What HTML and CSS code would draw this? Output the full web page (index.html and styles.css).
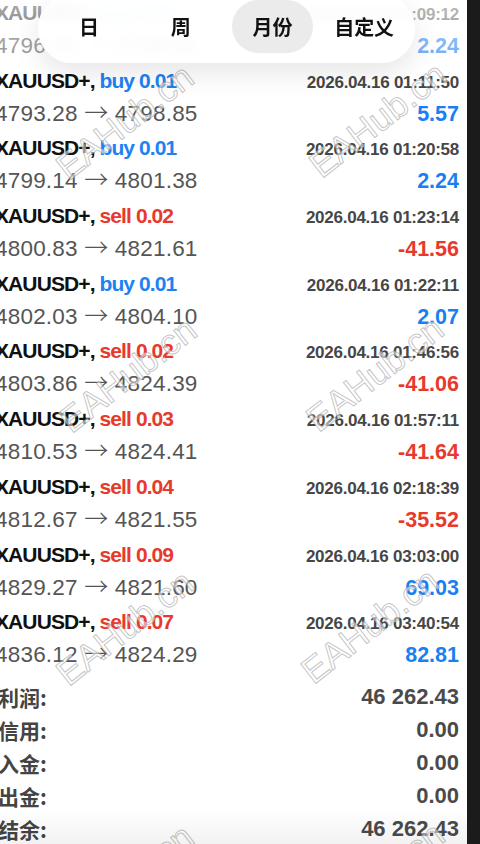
FILE: index.html
```html
<!DOCTYPE html>
<html lang="zh-CN">

<head>
    <meta charset="UTF-8" />
    <meta name="viewport" content="width=device-width, initial-scale=1.0" />
    <title>历史</title>
    <link rel="stylesheet" href="styles.css">
</head>

<body>
    <div class="phone">
        <div class="screen">
            <ul class="deals">
                <li class="deal">
                    <div class="deal-head">
                        <span class="sym">XAUUSD+, <span class="buy">buy 0.01</span></span>
                        <span class="time">2026.04.16 01:09:12</span>
                    </div>
                    <div class="deal-body">
                        <span class="prices">4796.41 <span class="arrow">→</span> 4798.65</span>
                        <span class="profit plus">2.24</span>
                    </div>
                </li>
                <li class="deal">
                    <div class="deal-head">
                        <span class="sym">XAUUSD+, <span class="buy">buy 0.01</span></span>
                        <span class="time">2026.04.16 01:11:50</span>
                    </div>
                    <div class="deal-body">
                        <span class="prices">4793.28 <span class="arrow">→</span> 4798.85</span>
                        <span class="profit plus">5.57</span>
                    </div>
                </li>
                <li class="deal">
                    <div class="deal-head">
                        <span class="sym">XAUUSD+, <span class="buy">buy 0.01</span></span>
                        <span class="time">2026.04.16 01:20:58</span>
                    </div>
                    <div class="deal-body">
                        <span class="prices">4799.14 <span class="arrow">→</span> 4801.38</span>
                        <span class="profit plus">2.24</span>
                    </div>
                </li>
                <li class="deal">
                    <div class="deal-head">
                        <span class="sym">XAUUSD+, <span class="sell">sell 0.02</span></span>
                        <span class="time">2026.04.16 01:23:14</span>
                    </div>
                    <div class="deal-body">
                        <span class="prices">4800.83 <span class="arrow">→</span> 4821.61</span>
                        <span class="profit minus">-41.56</span>
                    </div>
                </li>
                <li class="deal">
                    <div class="deal-head">
                        <span class="sym">XAUUSD+, <span class="buy">buy 0.01</span></span>
                        <span class="time">2026.04.16 01:22:11</span>
                    </div>
                    <div class="deal-body">
                        <span class="prices">4802.03 <span class="arrow">→</span> 4804.10</span>
                        <span class="profit plus">2.07</span>
                    </div>
                </li>
                <li class="deal">
                    <div class="deal-head">
                        <span class="sym">XAUUSD+, <span class="sell">sell 0.02</span></span>
                        <span class="time">2026.04.16 01:46:56</span>
                    </div>
                    <div class="deal-body">
                        <span class="prices">4803.86 <span class="arrow">→</span> 4824.39</span>
                        <span class="profit minus">-41.06</span>
                    </div>
                </li>
                <li class="deal">
                    <div class="deal-head">
                        <span class="sym">XAUUSD+, <span class="sell">sell 0.03</span></span>
                        <span class="time">2026.04.16 01:57:11</span>
                    </div>
                    <div class="deal-body">
                        <span class="prices">4810.53 <span class="arrow">→</span> 4824.41</span>
                        <span class="profit minus">-41.64</span>
                    </div>
                </li>
                <li class="deal">
                    <div class="deal-head">
                        <span class="sym">XAUUSD+, <span class="sell">sell 0.04</span></span>
                        <span class="time">2026.04.16 02:18:39</span>
                    </div>
                    <div class="deal-body">
                        <span class="prices">4812.67 <span class="arrow">→</span> 4821.55</span>
                        <span class="profit minus">-35.52</span>
                    </div>
                </li>
                <li class="deal">
                    <div class="deal-head">
                        <span class="sym">XAUUSD+, <span class="sell">sell 0.09</span></span>
                        <span class="time">2026.04.16 03:03:00</span>
                    </div>
                    <div class="deal-body">
                        <span class="prices">4829.27 <span class="arrow">→</span> 4821.60</span>
                        <span class="profit plus">69.03</span>
                    </div>
                </li>
                <li class="deal">
                    <div class="deal-head">
                        <span class="sym">XAUUSD+, <span class="sell">sell 0.07</span></span>
                        <span class="time">2026.04.16 03:40:54</span>
                    </div>
                    <div class="deal-body">
                        <span class="prices">4836.12 <span class="arrow">→</span> 4824.29</span>
                        <span class="profit plus">82.81</span>
                    </div>
                </li>
            </ul>

            <div class="summary">
                <div class="sum-row"><span class="sum-label">利润:</span><span class="sum-value">46 262.43</span></div>
                <div class="sum-row"><span class="sum-label">信用:</span><span class="sum-value">0.00</span></div>
                <div class="sum-row"><span class="sum-label">入金:</span><span class="sum-value">0.00</span></div>
                <div class="sum-row"><span class="sum-label">出金:</span><span class="sum-value">0.00</span></div>
                <div class="sum-row"><span class="sum-label">结余:</span><span class="sum-value">46 262.43</span></div>
            </div>

            <!-- watermark -->
            <div class="marks">
                <span class="mark m1">EAHub.cn</span>
                <span class="mark m2">EAHub.cn</span>
                <span class="mark m3">EAHub.cn</span>
                <span class="mark m4">EAHub.cn</span>
                <span class="mark m5">EAHub.cn</span>
                <span class="mark m6">EAHub.cn</span>
                <span class="mark m7">EAHub.cn</span>
                <span class="mark m8">EAHub.cn</span>
            </div>

            <div class="fade-top"></div>
            <div class="fade-bottom"></div>

            <div class="tabs">
                <span class="tab">日</span>
                <span class="tab">周</span>
                <span class="tab active">月份</span>
                <span class="tab">自定义</span>
            </div>
        </div>
        <div class="edge"></div>
    </div>
</body>

</html>
```

FILE: styles.css
```css
body {
    margin: 0;
    background: #1b1b1b;
    font-family: "Liberation Sans", Arial, "Noto Sans CJK SC", sans-serif;
    overflow: hidden;
}

.phone {
    display: flex;
    height: 844px;
}

.screen {
    position: relative;
    width: 467px;
    height: 844px;
    background: #fff;
    overflow: hidden;
}

.edge {
    flex: 1;
    background: #1b1b1b;
}

/* deals list */

.deals {
    list-style: none;
    margin: -4px 0 0 -5px;
    padding: 0 8px 0 0;
}

.deal-head {
    display: flex;
    justify-content: space-between;
    align-items: baseline;
    height: 30px;
    line-height: 34px;
}

.deal-body {
    display: flex;
    justify-content: space-between;
    align-items: baseline;
    height: 37.7px;
    line-height: 34px;
}

.sym {
    font-size: 21px;
    font-weight: bold;
    color: #111;
    letter-spacing: -0.9px;
}

.buy {
    color: #1d82f2;
}

.sell {
    color: #e8392d;
}

.time {
    font-size: 17px;
    font-weight: bold;
    color: #464646;
    letter-spacing: -0.25px;
}

.prices {
    font-size: 22.5px;
    color: #555;
    letter-spacing: 0.2px;
}

.arrow {
    font-family: "Noto Sans CJK SC", sans-serif;
    font-weight: 300;
    font-size: 24px;
}

.profit {
    font-size: 21.5px;
    font-weight: bold;
}

.profit.plus {
    color: #1a7ff2;
}

.profit.minus {
    color: #e8392d;
}

/* totals */

.summary {
    margin: 8px 0 0 -2px;
    padding-right: 8px;
}

.sum-row {
    display: flex;
    justify-content: space-between;
    align-items: center;
    height: 33px;
}

.sum-label {
    font-family: "Noto Sans CJK SC", sans-serif;
    font-size: 21px;
    font-weight: bold;
    color: #444;
}

.sum-value {
    font-size: 22px;
    font-weight: bold;
    color: #4a4a4a;
}

/* overlays */

.marks {
    position: absolute;
    inset: 0;
    pointer-events: none;
}

.mark {
    position: absolute;
    font-size: 36px;
    white-space: nowrap;
    color: rgba(255, 255, 255, 0.55);
    -webkit-text-stroke: 1px rgba(165, 165, 165, 0.65);
    transform: translate(-50%, -50%) rotate(-38deg);
}

.m1 { left: 125px; top: 122px; }
.m2 { left: 378px; top: 120px; }
.m3 { left: 128px; top: 375px; }
.m4 { left: 375px; top: 374px; }
.m5 { left: 125px; top: 628px; }
.m6 { left: 370px; top: 626px; }
.m7 { left: 125px; top: 882px; }
.m8 { left: 376px; top: 880px; }

.fade-top {
    position: absolute;
    left: 0;
    right: 0;
    top: 0;
    height: 64px;
    background: linear-gradient(rgba(255, 255, 255, 0.65), rgba(255, 255, 255, 0.35));
}

.fade-bottom {
    position: absolute;
    left: 0;
    right: 0;
    bottom: 0;
    height: 36px;
    background: linear-gradient(rgba(0, 0, 0, 0), rgba(0, 0, 0, 0.05));
}

.tabs {
    position: absolute;
    left: 38px;
    top: -6px;
    width: 377px;
    height: 69px;
    box-sizing: border-box;
    padding: 6px 5px 10px;
    display: flex;
    border-radius: 34px;
    background: rgba(255, 255, 255, 0.9);
    backdrop-filter: blur(6px);
    box-shadow: 0 10px 28px rgba(0, 0, 0, 0.1);
}

.tab {
    flex: 1;
    margin: 0 5px;
    display: flex;
    justify-content: center;
    align-items: center;
    border-radius: 27px;
    font-family: "Noto Sans CJK SC", sans-serif;
    font-size: 20px;
    font-weight: bold;
    color: #111;
}

.tab.active {
    background: #ebebeb;
}
```
